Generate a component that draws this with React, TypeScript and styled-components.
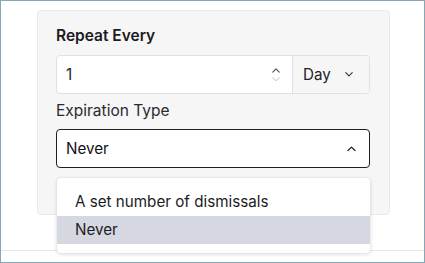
import React from "react";
import styled, { createGlobalStyle } from "styled-components";

const Global = createGlobalStyle`
  html, body { margin: 0; padding: 0; background: #ffffff; }
  body { font-family: Inter, "Noto Sans", sans-serif; -webkit-font-smoothing: antialiased; }
  * { box-sizing: border-box; }
`;

const Frame = styled.div`
  position: relative;
  width: 425px;
  height: 263px;
  border: 1px solid #88a7b5;
  background: #ffffff;
  overflow: hidden;
  display: flex;
  flex-direction: column;
`;

const Body = styled.div`
  flex: 1;
  padding: 9px 34px 0 36px;
`;

const Footer = styled.div`
  height: 12px;
  border-top: 1px solid #e6e6ec;
`;

const Panel = styled.div`
  background: #f6f6f6;
  border: 1px solid #e9e9ec;
  border-radius: 4px;
  padding: 16px 19px 46px 18px;
  display: flex;
  flex-direction: column;
`;

const Label = styled.div<{ $bold?: boolean }>`
  font-size: 15.5px;
  line-height: 18px;
  font-weight: ${(p) => (p.$bold ? 600 : 400)};
  color: ${(p) => (p.$bold ? "#1b1b1f" : "#2a2a30")};
  margin-bottom: ${(p) => (p.$bold ? 10 : 9)}px;
`;

const InputGroup = styled.div`
  display: flex;
  height: 39px;
  border: 1px solid #e1e0e9;
  border-radius: 4px;
  background: #ffffff;
  margin-bottom: 8px;
  overflow: hidden;
`;

const NumberField = styled.div`
  flex: 1;
  display: flex;
  align-items: center;
  padding: 0 12px 0 9px;
  font-size: 15.2px;
  color: #1b1b1f;
`;

const NumberValue = styled.span`
  flex: 1;
`;

const Spinner = styled.div`
  display: flex;
  flex-direction: column;
  align-items: center;
  gap: 4px;
`;

const Addon = styled.div`
  width: 77px;
  display: flex;
  align-items: center;
  gap: 14px;
  padding-left: 10px;
  border-left: 1px solid #e1e0e9;
  background: #f6f6f6;
  font-size: 15.2px;
  color: #222226;
`;

const SelectWrap = styled.div`
  position: relative;
`;

const Select = styled.div`
  height: 39px;
  border: 1px solid #1f1f22;
  border-radius: 4px;
  background: #ffffff;
  display: flex;
  align-items: center;
  justify-content: space-between;
  padding: 0 13px 0 9px;
  font-size: 15.2px;
  color: #111114;
`;

const Menu = styled.ul`
  position: absolute;
  top: 49px;
  left: 1px;
  right: 0;
  margin: 0;
  padding: 10px 0 9px;
  list-style: none;
  background: #ffffff;
  border-radius: 4px;
  box-shadow: 0 1px 4px rgba(0, 0, 0, 0.16), 0 0 1px rgba(0, 0, 0, 0.1);
  z-index: 10;
`;

const Option = styled.li<{ $active?: boolean }>`
  height: 28px;
  line-height: 28px;
  padding-left: 18px;
  font-size: 15.2px;
  color: #1b1b1f;
  background: ${(p) => (p.$active ? "#d6d8e1" : "transparent")};
`;

const Chevron = ({ up, color = "#2a2a30", size = 9 }: { up?: boolean; color?: string; size?: number }) => (
  <svg width={size} height={size * 0.6} viewBox="0 0 10 6" fill="none">
    <path
      d={up ? "M1 5.2 L5 1.2 L9 5.2" : "M1 0.8 L5 4.8 L9 0.8"}
      stroke={color}
      strokeWidth="1.4"
      strokeLinecap="round"
      strokeLinejoin="round"
    />
  </svg>
);

export default function App() {
  return (
    <>
      <Global />
      <Frame>
        <Body>
          <Panel>
            <Label $bold>Repeat Every</Label>
            <InputGroup>
              <NumberField>
                <NumberValue>1</NumberValue>
                <Spinner>
                  <Chevron up color="#505058" size={8} />
                  <Chevron color="#d4d4dc" size={8} />
                </Spinner>
              </NumberField>
              <Addon>
                <span>Day</span>
                <Chevron color="#3a3a40" size={8} />
              </Addon>
            </InputGroup>
            <Label>Expiration Type</Label>
            <SelectWrap>
              <Select>
                <span>Never</span>
                <Chevron up color="#1b1b1f" size={9} />
              </Select>
              <Menu>
                <Option>A set number of dismissals</Option>
                <Option $active>Never</Option>
              </Menu>
            </SelectWrap>
          </Panel>
        </Body>
        <Footer />
      </Frame>
    </>
  );
}
